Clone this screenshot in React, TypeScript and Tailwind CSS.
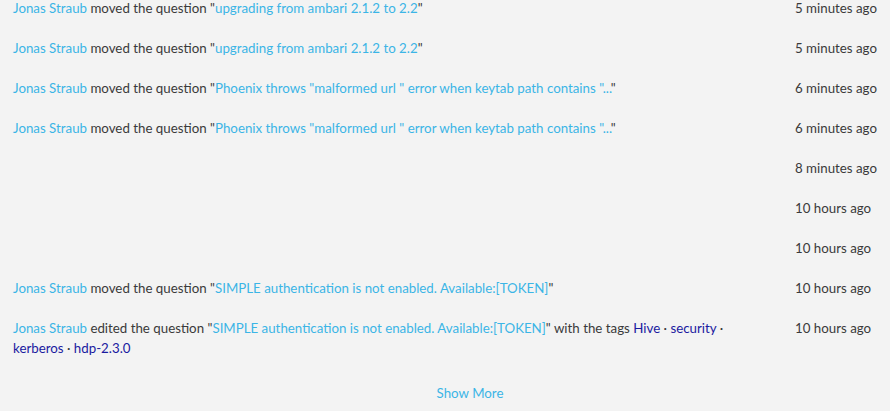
import React from "react";

const LINK = "text-[#3bb5e6]";
const TAG = "text-[#1a1aa0]";

type Row = { content?: React.ReactNode; time: string };

const Q = ({ children }: { children: React.ReactNode }) => (
  <>
    "<span className={LINK}>{children}</span>"
  </>
);

const User = () => <span className={LINK}>Jonas Straub</span>;

const rows: Row[] = [
  { content: <><User /> moved the question <Q>upgrading from ambari 2.1.2 to 2.2</Q></>, time: "5 minutes ago" },
  { content: <><User /> moved the question <Q>upgrading from ambari 2.1.2 to 2.2</Q></>, time: "5 minutes ago" },
  { content: <><User /> moved the question <Q>Phoenix throws "malformed url " error when keytab path contains "...</Q></>, time: "6 minutes ago" },
  { content: <><User /> moved the question <Q>Phoenix throws "malformed url " error when keytab path contains "...</Q></>, time: "6 minutes ago" },
  { time: "8 minutes ago" },
  { time: "10 hours ago" },
  { time: "10 hours ago" },
  { content: <><User /> moved the question <Q>SIMPLE authentication is not enabled. Available:[TOKEN]</Q></>, time: "10 hours ago" },
  {
    content: (
      <>
        <User /> edited the question <Q>SIMPLE authentication is not enabled. Available:[TOKEN]</Q> with the tags{" "}
        <span className={TAG}>Hive</span> · <span className={TAG}>security</span> ·{" "}
        <span className={TAG}>kerberos</span> · <span className={TAG}>hdp-2.3.0</span>
      </>
    ),
    time: "10 hours ago",
  },
];

export default function App() {
  return (
    <div
      className="w-[890px] h-[411px] overflow-hidden bg-[#f3f3f3] text-[#3a3a3a] text-[13.3px] leading-[20px]"
      style={{ fontFamily: "Lato, 'Open Sans', sans-serif" }}
    >
      <div className="-mt-3 flex flex-col">
        {rows.map((r, i) => (
          <div key={i} className="flex py-[10px] pl-[13px]">
            <div className="w-[762px] min-h-[20px]">{r.content}</div>
            <div className="ml-[20px] whitespace-nowrap">{r.time}</div>
          </div>
        ))}
      </div>
      <div className={`mt-[15px] text-center ${LINK} pl-[50px]`}>Show More</div>
    </div>
  );
}
